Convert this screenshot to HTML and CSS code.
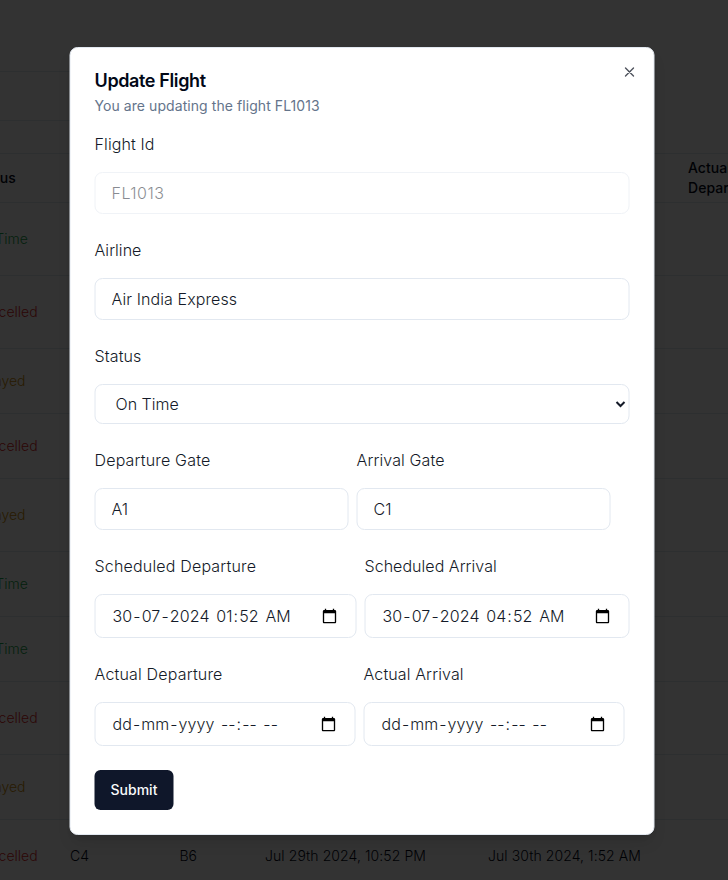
FILE: index.html
```html
<!DOCTYPE html>
<html lang="en">
<head>
<meta charset="utf-8">
<title>Update Flight</title>
<link rel="stylesheet" href="styles.css">
</head>
<body>
<main class="page">
  <div class="page-top"></div>
  <div class="toolbar"></div>
  <div class="toolbar-gap"></div>
  <div class="table">
    <div class="row head"><span>Status</span><span></span><span></span><span></span><span></span><span>Actual<br>Departure</span></div>
    <div class="row tall"><span class="green">On Time</span></div>
    <div class="row tall"><span class="red">Cancelled</span></div>
    <div class="row"><span class="yellow">Delayed</span></div>
    <div class="row"><span class="red">Cancelled</span></div>
    <div class="row tall"><span class="yellow">Delayed</span></div>
    <div class="row"><span class="green">On Time</span></div>
    <div class="row"><span class="green">On Time</span></div>
    <div class="row tall"><span class="red">Cancelled</span></div>
    <div class="row"><span class="yellow">Delayed</span></div>
    <div class="row last"><span class="red">Cancelled</span><span>C4</span><span>B6</span><span class="time">Jul 29th 2024, 10:52 PM</span><span class="time">Jul 30th 2024, 1:52 AM</span></div>
  </div>
</main>
<div class="overlay"></div>
<section class="dialog" role="dialog" aria-labelledby="title">
  <button class="close" aria-label="Close"><svg width="16" height="16" viewBox="0 0 24 24" fill="none" stroke="currentColor" stroke-width="2" stroke-linecap="round" stroke-linejoin="round"><path d="M18 6 6 18M6 6l12 12"/></svg></button>
  <header>
    <h2 id="title">Update Flight</h2>
    <p>You are updating the flight FL1013</p>
  </header>
  <form class="form">
    <div class="field muted"><label for="fid">Flight Id</label><input id="fid" class="control" value="FL1013" disabled></div>
    <div class="field"><label for="air" class="tight">Airline</label><input id="air" class="control" value="Air India Express"></div>
    <div class="field"><label for="status">Status</label><select id="status" class="control select"><option>On Time</option></select></div>
    <div class="pair gates">
      <div class="field"><label for="dg" class="wide">Departure Gate</label><input id="dg" class="control" value="A1"></div>
      <div class="field"><label for="ag">Arrival Gate</label><input id="ag" class="control" value="C1"></div>
    </div>
    <div class="pair scheduled">
      <div class="field"><label class="wide">Scheduled Departure</label><div class="control date"><div class="parts"><span>30</span>-<span>07</span>-<span>2024</span> <span>01</span>:<span>52</span> <span>AM</span></div><svg class="cal" viewBox="0 0 24 24"><path d="M20 3h-1V1h-2v2H7V1H5v2H4c-1.100 0-2 .900-2 2v16c0 1.100.900 2 2 2h16c1.100 0 2-.900 2-2V5c0-1.100-.900-2-2-2zm0 18H4V8h16v13z"/></svg></div></div>
      <div class="field"><label class="tight">Scheduled Arrival</label><div class="control date"><div class="parts"><span>30</span>-<span>07</span>-<span>2024</span> <span>04</span>:<span>52</span> <span>AM</span></div><svg class="cal" viewBox="0 0 24 24"><path d="M20 3h-1V1h-2v2H7V1H5v2H4c-1.100 0-2 .900-2 2v16c0 1.100.900 2 2 2h16c1.100 0 2-.900 2-2V5c0-1.100-.900-2-2-2zm0 18H4V8h16v13z"/></svg></div></div>
    </div>
    <div class="pair actual">
      <div class="field"><label class="wide">Actual Departure</label><div class="control date"><div class="parts"><span>dd</span>-<span>mm</span>-<span>yyyy</span> <span>--</span>:<span>--</span> <span>--</span></div><svg class="cal" viewBox="0 0 24 24"><path d="M20 3h-1V1h-2v2H7V1H5v2H4c-1.100 0-2 .900-2 2v16c0 1.100.900 2 2 2h16c1.100 0 2-.900 2-2V5c0-1.100-.900-2-2-2zm0 18H4V8h16v13z"/></svg></div></div>
      <div class="field"><label>Actual Arrival</label><div class="control date"><div class="parts"><span>dd</span>-<span>mm</span>-<span>yyyy</span> <span>--</span>:<span>--</span> <span>--</span></div><svg class="cal" viewBox="0 0 24 24"><path d="M20 3h-1V1h-2v2H7V1H5v2H4c-1.100 0-2 .900-2 2v16c0 1.100.900 2 2 2h16c1.100 0 2-.900 2-2V5c0-1.100-.900-2-2-2zm0 18H4V8h16v13z"/></svg></div></div>
    </div>
    <button class="submit" type="button">Submit</button>
  </form>
</section>
</body>
</html>
```

FILE: styles.css
```css
* { box-sizing: border-box; }
body {
  margin: 0;
  height: 880px;
  overflow: hidden;
  position: relative;
  font: 300 16px/24px Inter, "Liberation Sans", sans-serif;
  color: #020817;
  background: #fff;
}
h2, p { margin: 0; }
button, input, select { font: inherit; color: inherit; }

.page { width: 728px; overflow: hidden; }
.page-top { height: 72px; width: 360px; border-bottom: 1px solid #e2e8f0; }
.toolbar { height: 49px; width: 360px; border-bottom: 1px solid #e2e8f0; }
.toolbar-gap { height: 33px; border-bottom: 1px solid #e2e8f0; }
.table { font-size: 14px; line-height: 20px; }
.row {
  display: grid;
  grid-template-columns: 97.5px 109.5px 85.5px 223px 199.5px 120px;
  align-items: center;
  height: 65px;
  margin-left: -27.5px;
  border-bottom: 1px solid #e2e8f0;
  white-space: nowrap;
}
.row.tall { height: 73px; }
.row.head { height: 49px; margin-left: -27px; font-weight: 500; letter-spacing: .04px; }
.row.last { height: 61px; align-items: start; padding-top: 26px; }
.time { letter-spacing: .08px; }
.green { color: #16a34a; }
.red { color: #dc2626; }
.yellow { color: #ca8a04; }

.overlay { position: absolute; inset: 0; background: rgba(0, 0, 0, .8); }

.dialog {
  position: absolute;
  left: 362px;
  top: 47px;
  width: 585px;
  height: 788px;
  padding: 24px;
  transform: translateX(-50%);
  background: #fff;
  border: 1px solid #e2e8f0;
  border-radius: 8px;
  box-shadow: 0 10px 15px -3px rgba(0, 0, 0, .1), 0 4px 6px -4px rgba(0, 0, 0, .1);
}
.close {
  position: absolute;
  top: 16px;
  right: 16px;
  padding: 0;
  border: 0;
  background: none;
  opacity: .7;
}
.close svg { display: block; }
header { display: flex; flex-direction: column; gap: 6px; margin-bottom: 16px; }
header h2 { font-size: 18px; line-height: 18px; font-weight: 600; letter-spacing: -.37px; }
header p { font-size: 14px; line-height: 20px; font-weight: 400; letter-spacing: .07px; color: #64748b; }

.form { display: flex; flex-direction: column; gap: 24px; align-items: stretch; color: #141a28; }
.field { display: flex; flex-direction: column; gap: 16px; min-width: 0; }
.field label { letter-spacing: .12px; }
.field label.wide { letter-spacing: .18px; }
.field label.tight { letter-spacing: .04px; }
.control {
  width: 100%;
  height: 42px;
  padding: 8px 16px;
  border: 1px solid #e2e8f0;
  border-radius: 8px;
  background: #fff;
  letter-spacing: .1px;
}
.muted .control { opacity: .5; letter-spacing: .5px; }
.control.select { height: 40px; padding: 0 0 0 16px; letter-spacing: 0; }
.pair { display: grid; gap: 8px; }
.gates { grid-template-columns: 254px 254px; }
.scheduled { grid-template-columns: 262px 265px; }
.actual { grid-template-columns: 261px 261px; }
.control.date {
  display: flex;
  align-items: center;
  justify-content: space-between;
  height: 44px;
  padding-right: 18px;
}
.parts { white-space: pre; letter-spacing: .1px; }
.scheduled .parts { letter-spacing: .11px; }
.actual .parts { letter-spacing: .06px; }
.parts span { padding: 0 1px; }
.cal { width: 16px; height: 16px; fill: #000; }

.submit {
  align-self: flex-start;
  width: 79px;
  height: 40px;
  padding: 0;
  border: 0;
  border-radius: 6px;
  background: #0f172a;
  color: #f8fafc;
  font-size: 14px;
  font-weight: 500;
}
```
